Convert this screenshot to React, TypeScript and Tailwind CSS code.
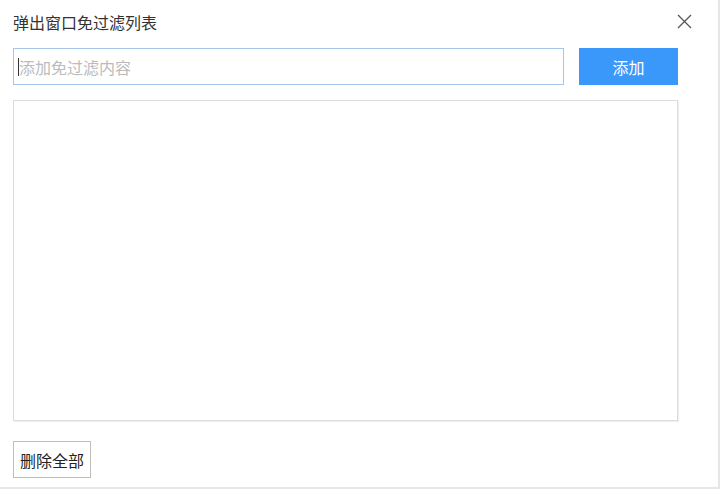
import React from "react";

export default function App() {
  return (
    <div
      className="w-[720px] h-[489px] bg-white border-r-2 border-b-2 border-[#e6e6e6] flex flex-col"
      style={{ fontFamily: '"Noto Sans CJK SC", "Noto Sans", sans-serif' }}
    >
      <div className="flex items-center justify-between pl-[13px] pr-[26px] pt-[7px] h-[37px]">
        <div className="text-[16px] leading-[22px] text-[#333]">弹出窗口免过滤列表</div>
        <svg width="15" height="15" viewBox="0 0 15 15" className="mt-[-2px]">
          <path d="M1 1 L14 14 M14 1 L1 14" stroke="#555" strokeWidth="1.3" fill="none" />
        </svg>
      </div>
      <div className="flex items-center pl-[13px] pt-[11px] gap-[15px]">
        <div className="relative w-[551px] h-[37px]">
          <input
            className="w-full h-full border border-[#a3c6ea] outline-none pl-[5px] text-[16px] text-[#333] placeholder:text-[#bbbbbb]"
            placeholder="添加免过滤内容"
            style={{ fontFamily: '"Noto Sans CJK SC", "Noto Sans", sans-serif' }}
          />
          <span className="absolute left-[5px] top-[10px] w-px h-[18px] bg-[#333]" />
        </div>
        <button className="w-[99px] h-[37px] bg-[#3a98fa] text-white text-[16px]">添加</button>
      </div>
      <div className="ml-[13px] mt-[15px] w-[665px] h-[321px] border border-[#dcdcdc] shadow-[1px_1px_1px_rgba(0,0,0,0.06)]" />
      <div className="pl-[13px] pt-[20px]">
        <button className="h-[37px] px-[6px] border border-[#bdbdbd] bg-white text-[16px] text-[#222]">
          删除全部
        </button>
      </div>
    </div>
  );
}
